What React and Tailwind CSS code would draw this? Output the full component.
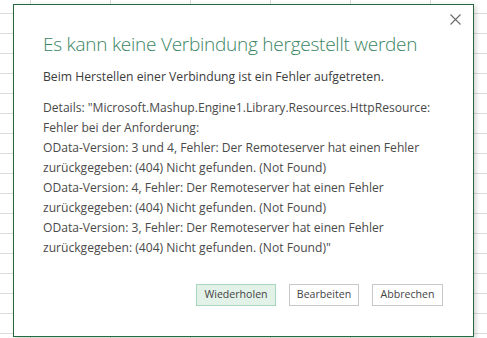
export default function App() {
  const details = [
    'Details: "Microsoft.Mashup.Engine1.Library.Resources.HttpResource:',
    'Fehler bei der Anforderung:',
    'OData-Version: 3 und 4, Fehler: Der Remoteserver hat einen Fehler',
    'zurückgegeben: (404) Nicht gefunden. (Not Found)',
    'OData-Version: 4, Fehler: Der Remoteserver hat einen Fehler',
    'zurückgegeben: (404) Nicht gefunden. (Not Found)',
    'OData-Version: 3, Fehler: Der Remoteserver hat einen Fehler',
    'zurückgegeben: (404) Nicht gefunden. (Not Found)"',
  ];
  return (
    <div className="relative w-[487px] h-[338px] overflow-hidden bg-white bg-[linear-gradient(to_right,#dcdcdc_1px,transparent_1px),linear-gradient(to_bottom,#dcdcdc_1px,transparent_1px)] bg-size-[80px_20px] bg-position-[30px_13px] font-['Open_Sans',sans-serif]">
      <div className="absolute left-[13px] top-[4px] w-[461px] h-[333px] bg-white border border-[#24693f] shadow-[2px_2px_5px_rgba(0,0,0,0.18)] flex flex-col pl-[29px] pr-[30px] pt-[25px] pb-[30px]">
        <button className="absolute right-[10px] top-[6px] w-[16px] h-[16px] flex items-center justify-center">
          <svg width="11" height="11" viewBox="0 0 11 11">
            <path d="M0.5 0.5 L10.5 10.5 M10.5 0.5 L0.5 10.5" stroke="#6a6a6a" strokeWidth="1.1" fill="none" />
          </svg>
        </button>
        <div className="text-[19px] tracking-[-0.25px] leading-[28px] font-light text-[#3a8562] whitespace-nowrap">
          Es kann keine Verbindung hergestellt werden
        </div>
        <div className="mt-[9px] text-[12.2px] leading-[20px] text-[#3c3c3c] whitespace-nowrap">
          Beim Herstellen einer Verbindung ist ein Fehler aufgetreten.
        </div>
        <div className="mt-[11px] text-[12.1px] leading-[20px] text-[#4a4a4a] whitespace-nowrap">
          {details.map((l, i) => (
            <div key={i}>{l}</div>
          ))}
        </div>
        <div className="mt-auto flex justify-end gap-[13px] text-[10.6px] text-[#444]">
          <button className="w-[80px] h-[22px] bg-[#e3f2e9] border border-[#a9d6bc]">Wiederholen</button>
          <button className="w-[70px] h-[22px] bg-white border border-[#c8c8c8]">Bearbeiten</button>
          <button className="w-[71px] h-[22px] bg-white border border-[#c8c8c8]">Abbrechen</button>
        </div>
      </div>
    </div>
  );
}
